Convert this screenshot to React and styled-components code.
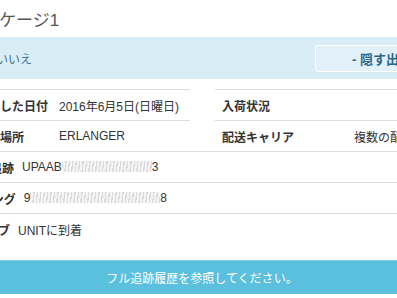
import React from 'react'
import styled, { createGlobalStyle } from 'styled-components'

const GlobalStyle = createGlobalStyle`
  html, body {
    margin: 0;
    padding: 0;
    background: #fff;
    overflow: hidden;
  }
  body {
    font-family: "Liberation Sans", "Noto Sans CJK JP", sans-serif;
    font-size: 12px;
    color: #333;
  }
  * { box-sizing: border-box; }
`

const Page = styled.div`
  width: 484px;
  margin-left: -40px;
`

const Title = styled.h2`
  margin: 0;
  height: 37px;
  display: flex;
  align-items: center;
  padding-left: 5px;
  font-size: 17px;
  font-weight: normal;
  color: #555;
`

const Band = styled.div`
  height: 42px;
  background: #d9edf7;
  display: flex;
  align-items: center;
  justify-content: space-between;
  padding: 0 10px 0 36px;
`

const BandText = styled.span`
  color: #3a7396;
  font-size: 12px;
`

const ToggleButton = styled.button`
  width: 119px;
  height: 27px;
  border: 1.5px solid #fff;
  border-radius: 3px;
  background: #e2f1f9;
  color: #2c6588;
  font-family: inherit;
  font-size: 13px;
  font-weight: bold;
  text-align: left;
  padding: 0 0 0 36px;
  white-space: nowrap;
  overflow: hidden;
`

const Columns = styled.div`
  margin-top: 10px;
  display: grid;
  grid-template-columns: 230px 229px;
  column-gap: 25px;
`

const Row = styled.div`
  height: 31px;
  border-top: 1px solid #ddd;
  display: grid;
  grid-template-columns: ${p => p.$label}px 1fr;
  align-items: center;
  padding-left: ${p => p.$pad}px;
  white-space: nowrap;
  overflow: hidden;
`

const Label = styled.span`
  font-weight: bold;
  color: #333;
`

const Value = styled.span`
  color: #333;
`

const FullRow = styled.div`
  height: 31px;
  border-top: 1px solid #ddd;
  display: flex;
  align-items: center;
  gap: 8px;
  white-space: nowrap;
`

const FullLabel = styled(Label)`
  margin-left: ${p => p.$indent}px;
`

// stand-in for the blurred-out part of a tracking number
const Redacted = styled.span`
  display: inline-block;
  width: ${p => p.$w}px;
  height: 11px;
  vertical-align: -1px;
  background: repeating-linear-gradient(
    97deg,
    #dadada 0 1.3px,
    #f5f5f5 1.3px 3.4px
  );
`

const HistoryButton = styled.button`
  display: block;
  width: 100%;
  height: 34px;
  margin-top: 16px;
  border: none;
  border-top: 1px solid #7fd0e8;
  background: #5bc0de;
  color: #fff;
  font-family: inherit;
  font-size: 12px;
`

const leftRows = [
  { label: '出荷した日付', value: '2016年6月5日(日曜日)' },
  { label: '出荷場所', value: 'ERLANGER' },
]

const rightRows = [
  { label: '入荷状況', value: '' },
  { label: '配送キャリア', value: '複数の配送業者' },
]

const App = () => {
  return (
    <>
      <GlobalStyle />
      <Page>
        <Title>パッケージ1</Title>
        <Band>
          <BandText>いいえ</BandText>
          <ToggleButton>- 隠す出荷詳細</ToggleButton>
        </Band>
        <Columns>
          <div>
            {leftRows.map((r) => (
              <Row key={r.label} $label={83} $pad={16}>
                <Label>{r.label}</Label>
                <Value>{r.value}</Value>
              </Row>
            ))}
          </div>
          <div>
            {rightRows.map((r) => (
              <Row key={r.label} $label={132} $pad={7}>
                <Label>{r.label}</Label>
                <Value>{r.value}</Value>
              </Row>
            ))}
          </div>
        </Columns>
        <FullRow>
          <FullLabel $indent={30}>追跡</FullLabel>
          <Value>UPAAB<Redacted $w={90} />3</Value>
        </FullRow>
        <FullRow>
          <FullLabel $indent={-16}>トラッキング</FullLabel>
          <Value>9<Redacted $w={130} />8</Value>
        </FullRow>
        <FullRow>
          <FullLabel $indent={14}>ライブ</FullLabel>
          <Value>UNITに到着</Value>
        </FullRow>
        <HistoryButton>フル追跡履歴を参照してください。</HistoryButton>
      </Page>
    </>
  )
}

export default App
